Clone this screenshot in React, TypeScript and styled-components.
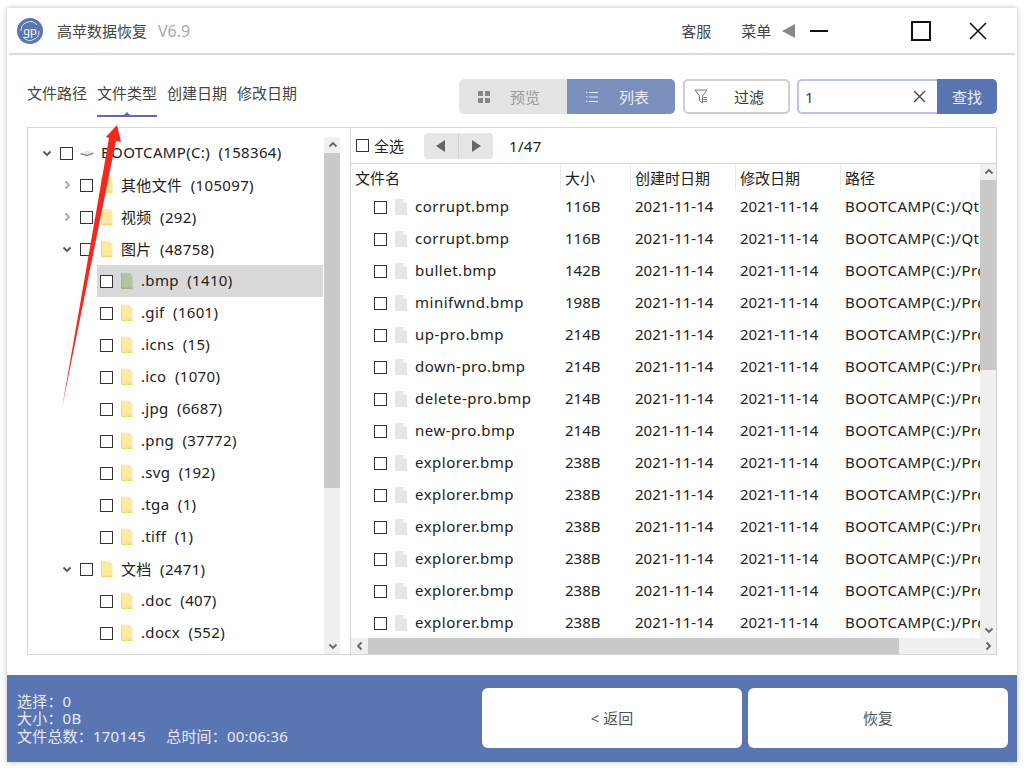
import React from "react";
import styled, { createGlobalStyle } from "styled-components";

const GlobalStyle = createGlobalStyle`
  html, body {
    margin: 0;
    padding: 0;
    background: #f4f4f4;
  }
  * {
    box-sizing: border-box;
  }
`;

const FONT = `"Noto Sans", "Noto Sans CJK SC", sans-serif`;

const Page = styled.div`
  position: relative;
  width: 1024px;
  height: 768px;
  padding: 8px 7px 6px;
  overflow: hidden;
  background: #fff;
  font-family: ${FONT};
  color: #222;
`;

const Window = styled.div`
  display: flex;
  flex-direction: column;
  width: 1010px;
  height: 754px;
  background: #fff;
  box-shadow: 0 0 5px rgba(0, 0, 0, 0.28);
`;

/* title bar */
const TitleBar = styled.div`
  display: flex;
  align-items: center;
  flex: none;
  height: 47px;
  margin: 0 2px 0 2px;
  padding: 0 0 0 8px;
  border-bottom: 2px solid #dcdcdc;
`;

const AppName = styled.span`
  margin-left: 14px;
  font-size: 15px;
  color: #444;
`;

const Version = styled.span`
  margin-left: 11px;
  font-size: 16px;
  color: #aaa;
`;

const TitleLink = styled.span<{ $ml: number }>`
  font-size: 15px;
  color: #444;
  margin-left: ${(p) => p.$ml}px;
`;

const WinIcon = styled.svg<{ $ml: number }>`
  flex: none;
  margin-left: ${(p) => p.$ml}px;
`;

/* toolbar */
const ToolRow = styled.div`
  display: flex;
  align-items: flex-start;
  flex: none;
  height: 72px;
  padding: 24px 20px 0;
`;

const Tabs = styled.div`
  display: flex;
  gap: 10px;
`;

const Tab = styled.div<{ $active?: boolean }>`
  position: relative;
  width: 60px;
  height: 38px;
  line-height: 29px;
  font-size: 15px;
  white-space: nowrap;
  color: #444;
  border-bottom: 2px solid ${(p) => (p.$active ? "#5a6bb0" : "transparent")};

  &::after {
    content: "";
    display: ${(p) => (p.$active ? "block" : "none")};
    position: absolute;
    left: 27px;
    bottom: 0;
    border-left: 3px solid transparent;
    border-right: 3px solid transparent;
    border-bottom: 3px solid #5a6bb0;
  }
`;

const ToolRight = styled.div`
  display: flex;
  margin-left: auto;
`;

const Toggle = styled.div`
  display: flex;
  width: 216px;
  height: 35px;
  border-radius: 5px;
  overflow: hidden;
`;

const ToggleItem = styled.div<{ $on?: boolean }>`
  display: flex;
  align-items: center;
  width: 108px;
  padding-left: 18px;
  gap: ${(p) => (p.$on ? 20 : 19)}px;
  font-size: 15px;
  background: ${(p) => (p.$on ? "#7b8fbd" : "#e4e4e4")};
  color: ${(p) => (p.$on ? "#e8ecf5" : "#999")};
`;

const FilterButton = styled.div`
  display: flex;
  align-items: center;
  width: 107px;
  height: 35px;
  margin-left: 8px;
  padding-left: 9px;
  gap: 26px;
  font-size: 15px;
  color: #333;
  background: #fff;
  border: 2px solid #cfcfcf;
  border-radius: 5px;
`;

const SearchBox = styled.div`
  display: flex;
  width: 200px;
  height: 35px;
  margin-left: 7px;
`;

const SearchInput = styled.div`
  display: flex;
  align-items: center;
  justify-content: space-between;
  width: 140px;
  padding: 0 11px 0 6px;
  font-size: 15px;
  color: #444;
  border: 2px solid #b9c4e4;
  border-right: none;
  border-radius: 5px 0 0 5px;
`;

const SearchButton = styled.div`
  display: flex;
  align-items: center;
  justify-content: center;
  flex: 1;
  font-size: 15px;
  color: #e8ecf5;
  background: #5a76b2;
  border-radius: 0 5px 5px 0;
`;

/* panels */
const Panels = styled.div`
  display: flex;
  flex: none;
  height: 528px;
  margin: 0 20px;
  border: 1px solid #d6d6d6;
`;

const LeftPanel = styled.div`
  display: flex;
  flex: none;
  width: 323px;
  padding-top: 9px;
  border-right: 1px solid #d6d6d6;
`;

const Tree = styled.div`
  flex: none;
  width: 296px;
  overflow: hidden;
`;

const TreeRow = styled.div<{ $level: number; $selected?: boolean }>`
  display: flex;
  align-items: center;
  height: 32px;
  margin-left: ${(p) => (p.$level === 2 ? 69 : 0)}px;
  margin-right: 1px;
  padding-left: ${(p) => (p.$level === 0 ? 12 : p.$level === 1 ? 32 : 3)}px;
  font-size: 15px;
  letter-spacing: 0.33px;
  white-space: pre;
  background: ${(p) => (p.$selected ? "#d9d9d9" : "transparent")};
`;

const RowText = styled.span`
  margin-top: -2px;
`;

const Caret = styled.span`
  display: flex;
  align-items: center;
  justify-content: center;
  flex: none;
  width: 14px;
  margin-right: 6px;
`;

const Check = styled.span<{ $mr?: number }>`
  flex: none;
  width: 13px;
  height: 13px;
  margin-right: ${(p) => p.$mr ?? 7}px;
  background: #fff;
  border: 1px solid #333;
`;

const IconSlot = styled.span`
  display: flex;
  align-items: center;
  flex: none;
  width: 14px;
  margin-right: 7px;
`;

const VScroll = styled.div`
  display: flex;
  flex-direction: column;
  flex: none;
  width: 16px;
  background: #f0f0f0;
`;

const ScrollEnd = styled.div`
  display: flex;
  align-items: center;
  justify-content: center;
  flex: none;
  width: 17px;
  height: 16px;
`;

const ScrollThumb = styled.div<{ $size: number }>`
  flex: none;
  width: 16px;
  height: ${(p) => p.$size}px;
  background: #c9c9c9;
`;

const ScrollRest = styled.div`
  flex: 1;
`;

const RightPanel = styled.div`
  display: flex;
  flex-direction: column;
  flex: 1;
  min-width: 0;
`;

const ListTop = styled.div`
  display: flex;
  align-items: center;
  flex: none;
  height: 36px;
  padding-left: 5px;
  font-size: 15px;
  border-bottom: 1px solid #d6d6d6;
`;

const Pager = styled.div`
  display: flex;
  width: 69px;
  height: 26px;
  margin-left: 20px;
  background: #e6e6e6;
  border-radius: 4px;
`;

const PagerButton = styled.div<{ $first?: boolean }>`
  display: flex;
  align-items: center;
  justify-content: center;
  flex: 1;
  border-right: ${(p) => (p.$first ? "1px solid #d4d4d4" : "none")};
`;

const PageNum = styled.span`
  margin-left: 16px;
  font-size: 15px;
  letter-spacing: 0.3px;
`;

const ListBody = styled.div`
  display: flex;
  flex: 1;
  min-height: 0;
`;

const ListCol = styled.div`
  flex: none;
  width: 629px;
  overflow: hidden;
`;

const HeadRow = styled.div`
  display: grid;
  grid-template-columns: 210px 70px 105px 105px 139px;
  height: 27px;
  font-size: 15px;
`;

const HeadCell = styled.div`
  display: flex;
  align-items: center;
  padding-left: 4px;
  white-space: nowrap;
  border-right: 1px solid #e8e8e8;

  &:last-child {
    border-right: none;
  }
`;

const FileRow = styled.div`
  display: grid;
  grid-template-columns: 210px 70px 105px 105px 139px;
  height: 32px;
  font-size: 15px;
  white-space: nowrap;
`;

const NameCell = styled.div`
  display: flex;
  align-items: center;
  padding-left: 23px;
  letter-spacing: 0.5px;
`;

const FileCell = styled.div<{ $wide?: boolean }>`
  display: flex;
  align-items: center;
  padding-left: 4px;
  overflow: hidden;
  letter-spacing: ${(p) => (p.$wide ? "0.45px" : "0")};
`;

const HScroll = styled.div`
  display: flex;
  flex: none;
  height: 16px;
  background: #f0f0f0;
`;

const HThumb = styled.div`
  flex: none;
  width: 531px;
  height: 16px;
  background: #c9c9c9;
`;

/* footer */
const Footer = styled.div`
  display: flex;
  align-items: center;
  flex: none;
  height: 87px;
  margin-top: 20px;
  padding: 0 9px 2px 10px;
  background: #5a76b2;
`;

const FootInfo = styled.div`
  flex: 1;
  padding-top: 3px;
  font-size: 15px;
  line-height: 17.5px;
  letter-spacing: 0.2px;
  color: #e6ebf5;
  white-space: pre;
`;

const FootButton = styled.div`
  display: flex;
  align-items: center;
  justify-content: center;
  width: 260px;
  height: 60px;
  margin-left: 6px;
  font-size: 15px;
  color: #555;
  background: #fff;
  border-radius: 6px;
`;

const ArrowLayer = styled.svg`
  position: absolute;
  left: 0;
  top: 0;
  pointer-events: none;
`;

const Chevron = ({ dir, color = "#666" }: { dir: "up" | "down" | "left" | "right"; color?: string }) => {
  const d = {
    up: "M1.5 6.5 L5 3 L8.5 6.5",
    down: "M1.5 3.5 L5 7 L8.5 3.5",
    left: "M6.5 1.5 L3 5 L6.5 8.5",
    right: "M3.5 1.5 L7 5 L3.5 8.5",
  }[dir];
  return (
    <svg width="10" height="10" viewBox="0 0 10 10">
      <path d={d} fill="none" stroke={color} strokeWidth="1.8" />
    </svg>
  );
};

const Folder = ({ green }: { green?: boolean }) => (
  <svg width="14" height="18" viewBox="0 0 14 18">
    <path d="M1 1 H10 L12.5 4 V17 H1 Z" fill={green ? "#b0c4a0" : "#fde9a0"} />
    <path d="M1 1 V17 H12.5 V15.6 H2 V1 Z" fill={green ? "#9cb58c" : "#f5d96c"} />
  </svg>
);

const FileIcon = () => (
  <svg width="14" height="18" viewBox="0 0 14 18">
    <path d="M1 1 H9 L13 5 V17 H1 Z" fill="#e6e6e6" />
    <path d="M9 1 L13 5 H9 Z" fill="#f5f5f5" />
  </svg>
);

const DriveIcon = () => (
  <svg width="15" height="12" viewBox="0 0 15 12">
    <path d="M0.5 6 L8 3.5 L14.5 5.5 L7.5 8 Z" fill="#e4e4e4" />
    <path d="M0.5 6 L7.5 8 L14.5 5.5 V7 L7.5 9.5 L0.5 7.5 Z" fill="#8a8a8a" />
  </svg>
);

const Logo = () => (
  <svg width="26" height="26" viewBox="0 0 26 26">
    <circle cx="13" cy="13" r="13" fill="#5a76b2" />
    <path d="M4 13 A9 9 0 0 1 20 7" fill="none" stroke="#dfe6f3" strokeWidth="1" />
    <path d="M22 13 A9 9 0 0 1 6 19" fill="none" stroke="#dfe6f3" strokeWidth="1" />
    <text x="13" y="16.5" textAnchor="middle" fontSize="11" fill="#fff" fontFamily="Noto Sans">
      gp
    </text>
  </svg>
);

type TreeItem = { level: number; label: string; open?: boolean; caret?: boolean; icon?: "drive" | "green"; selected?: boolean };

const treeItems: TreeItem[] = [
  { level: 0, label: "BOOTCAMP(C:)  (158364)", caret: true, open: true, icon: "drive" },
  { level: 1, label: "其他文件  (105097)", caret: true },
  { level: 1, label: "视频  (292)", caret: true },
  { level: 1, label: "图片  (48758)", caret: true, open: true },
  { level: 2, label: ".bmp  (1410)", icon: "green", selected: true },
  { level: 2, label: ".gif  (1601)" },
  { level: 2, label: ".icns  (15)" },
  { level: 2, label: ".ico  (1070)" },
  { level: 2, label: ".jpg  (6687)" },
  { level: 2, label: ".png  (37772)" },
  { level: 2, label: ".svg  (192)" },
  { level: 2, label: ".tga  (1)" },
  { level: 2, label: ".tiff  (1)" },
  { level: 1, label: "文档  (2471)", caret: true, open: true },
  { level: 2, label: ".doc  (407)" },
  { level: 2, label: ".docx  (552)" },
];

const files: [string, string, string][] = [
  ["corrupt.bmp", "116B", "Qt"],
  ["corrupt.bmp", "116B", "Qt"],
  ["bullet.bmp", "142B", "Pro"],
  ["minifwnd.bmp", "198B", "Pro"],
  ["up-pro.bmp", "214B", "Pro"],
  ["down-pro.bmp", "214B", "Pro"],
  ["delete-pro.bmp", "214B", "Pro"],
  ["new-pro.bmp", "214B", "Pro"],
  ["explorer.bmp", "238B", "Pro"],
  ["explorer.bmp", "238B", "Pro"],
  ["explorer.bmp", "238B", "Pro"],
  ["explorer.bmp", "238B", "Pro"],
  ["explorer.bmp", "238B", "Pro"],
  ["explorer.bmp", "238B", "Pro"],
];

const App = () => {
  return (
    <Page>
      <GlobalStyle />
      <Window>
        <TitleBar>
          <Logo />
          <AppName>高苹数据恢复</AppName>
          <Version>V6.9</Version>
          <TitleLink $ml={491}>客服</TitleLink>
          <TitleLink $ml={30}>菜单</TitleLink>
          <WinIcon $ml={11} width="13" height="14" viewBox="0 0 13 14">
            <path d="M0 7 L13 0 V14 Z" fill="#888" />
          </WinIcon>
          <WinIcon $ml={15} width="18" height="4" viewBox="0 0 18 4">
            <rect y="1" width="18" height="2" fill="#111" />
          </WinIcon>
          <WinIcon $ml={83} width="20" height="20" viewBox="0 0 20 20">
            <rect x="1" y="1" width="18" height="18" fill="none" stroke="#111" strokeWidth="2" />
          </WinIcon>
          <WinIcon $ml={38} width="18" height="18" viewBox="0 0 18 18">
            <path d="M1 1 L17 17 M17 1 L1 17" stroke="#111" strokeWidth="1.6" />
          </WinIcon>
        </TitleBar>

        <ToolRow>
          <Tabs>
            <Tab>文件路径</Tab>
            <Tab $active>文件类型</Tab>
            <Tab>创建日期</Tab>
            <Tab>修改日期</Tab>
          </Tabs>
          <ToolRight>
            <Toggle>
              <ToggleItem>
                <svg width="14" height="14" viewBox="0 0 14 14" fill="#888">
                  <rect x="1" y="1" width="5" height="5" />
                  <rect x="8" y="1" width="5" height="5" />
                  <rect x="1" y="8" width="5" height="5" />
                  <rect x="8" y="8" width="5" height="5" />
                </svg>
                预览
              </ToggleItem>
              <ToggleItem $on>
                <svg width="14" height="14" viewBox="0 0 14 14" stroke="#e8ecf5" strokeWidth="1">
                  <path d="M1 2.5 H2.5 M4 2.5 H13 M1 7 H2.5 M4 7 H13 M1 11.5 H2.5 M4 11.5 H13" />
                </svg>
                列表
              </ToggleItem>
            </Toggle>
            <FilterButton>
              <svg width="14" height="15" viewBox="0 0 14 15" fill="none" stroke="#777" strokeWidth="1">
                <path d="M1 1 H13 L8.5 7 V14 L5.5 11.5 V7 Z" />
                <path d="M9.5 8.5 H13 M9.5 10.5 H13 M9.5 12.5 H13" />
              </svg>
              过滤
            </FilterButton>
            <SearchBox>
              <SearchInput>
                1
                <svg width="13" height="13" viewBox="0 0 13 13">
                  <path d="M1 1 L12 12 M12 1 L1 12" stroke="#444" strokeWidth="1.3" />
                </svg>
              </SearchInput>
              <SearchButton>查找</SearchButton>
            </SearchBox>
          </ToolRight>
        </ToolRow>

        <Panels>
          <LeftPanel>
            <Tree>
              {treeItems.map((item, i) => (
                <TreeRow key={i} $level={item.level} $selected={item.selected}>
                  {item.caret && (
                    <Caret>
                      <Chevron dir={item.open ? "down" : "right"} color={item.open ? "#555" : "#aaa"} />
                    </Caret>
                  )}
                  <Check />
                  <IconSlot>
                    {item.icon === "drive" ? <DriveIcon /> : <Folder green={item.icon === "green"} />}
                  </IconSlot>
                  <RowText>{item.label}</RowText>
                </TreeRow>
              ))}
            </Tree>
            <VScroll>
              <ScrollEnd>
                <Chevron dir="up" />
              </ScrollEnd>
              <ScrollThumb $size={335} />
              <ScrollRest />
              <ScrollEnd>
                <Chevron dir="down" />
              </ScrollEnd>
            </VScroll>
          </LeftPanel>

          <RightPanel>
            <ListTop>
              <Check $mr={5} />
              全选
              <Pager>
                <PagerButton $first>
                  <svg width="10" height="12" viewBox="0 0 10 12">
                    <path d="M9 0 V12 L0 6 Z" fill="#666" />
                  </svg>
                </PagerButton>
                <PagerButton>
                  <svg width="10" height="12" viewBox="0 0 10 12">
                    <path d="M1 0 V12 L10 6 Z" fill="#666" />
                  </svg>
                </PagerButton>
              </Pager>
              <PageNum>1/47</PageNum>
            </ListTop>
            <ListBody>
              <ListCol>
                <HeadRow>
                  <HeadCell>文件名</HeadCell>
                  <HeadCell>大小</HeadCell>
                  <HeadCell>创建时日期</HeadCell>
                  <HeadCell>修改日期</HeadCell>
                  <HeadCell>路径</HeadCell>
                </HeadRow>
                {files.map((f, i) => (
                  <FileRow key={i}>
                    <NameCell>
                      <Check />
                      <IconSlot>
                        <FileIcon />
                      </IconSlot>
                      <RowText>{f[0]}</RowText>
                    </NameCell>
                    <FileCell>
                      <RowText>{f[1]}</RowText>
                    </FileCell>
                    <FileCell>
                      <RowText>2021-11-14</RowText>
                    </FileCell>
                    <FileCell>
                      <RowText>2021-11-14</RowText>
                    </FileCell>
                    <FileCell $wide>
                      <RowText>BOOTCAMP(C:)/{f[2]}</RowText>
                    </FileCell>
                  </FileRow>
                ))}
              </ListCol>
              <VScroll>
                <ScrollEnd>
                  <Chevron dir="up" />
                </ScrollEnd>
                <ScrollThumb $size={190} />
                <ScrollRest />
                <ScrollEnd>
                  <Chevron dir="down" />
                </ScrollEnd>
              </VScroll>
            </ListBody>
            <HScroll>
              <ScrollEnd>
                <Chevron dir="left" />
              </ScrollEnd>
              <HThumb />
              <ScrollRest />
              <ScrollEnd>
                <Chevron dir="right" />
              </ScrollEnd>
            </HScroll>
          </RightPanel>
        </Panels>

        <Footer>
          <FootInfo>
            {"选择：0\n大小：0B\n文件总数：170145     总时间：00:06:36"}
          </FootInfo>
          <FootButton>{"< 返回"}</FootButton>
          <FootButton>恢复</FootButton>
        </Footer>
      </Window>

      <ArrowLayer width="1024" height="768" viewBox="0 0 1024 768">
        <path d="M117 125 L121 142 L116 141 L62 408 L109 138 L106 137 Z" fill="#f5281e" />
      </ArrowLayer>
    </Page>
  );
};

export default App;
